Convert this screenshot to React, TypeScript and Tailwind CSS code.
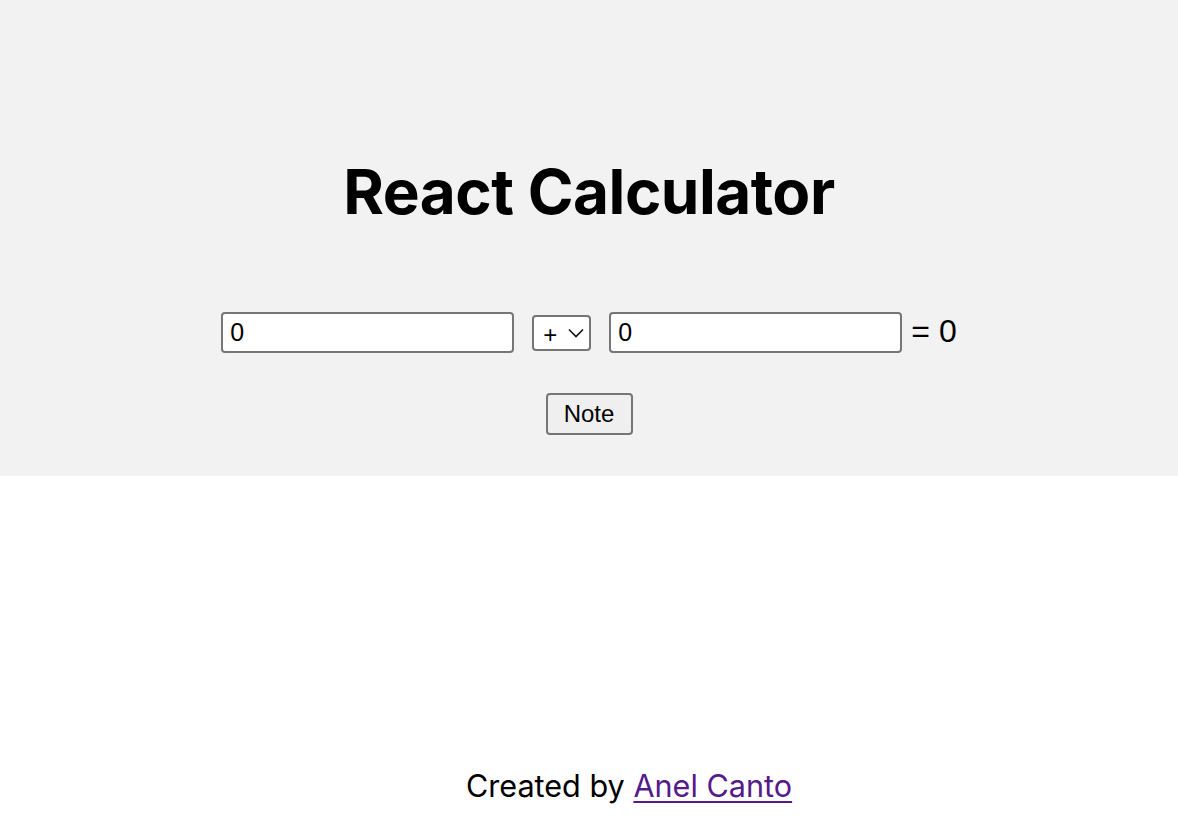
import React, { useState } from 'react';

export default function App() {
  const [a, setA] = useState('0');
  const [b, setB] = useState('0');
  const [op, setOp] = useState('+');

  const x = parseFloat(a) || 0;
  const y = parseFloat(b) || 0;
  const result = op === '+' ? x + y : op === '-' ? x - y : op === '*' ? x * y : y === 0 ? 0 : x / y;

  return (
    <div className="min-h-screen flex flex-col bg-white text-black">
      {/* Calculator */}
      <div className="bg-[#f2f2f2] h-[476px] flex flex-col items-center pt-[160px]">
        <h1 className="font-['Inter',sans-serif] font-bold text-[62px] leading-[64px] tracking-[-0.5px]">
          React Calculator
        </h1>

        <div className="flex items-center mt-[88px] font-['Liberation_Sans',Arial,sans-serif]">
          <input
            value={a}
            onChange={(e) => setA(e.target.value)}
            className="w-[293px] h-[41px] bg-white border-2 border-[#767676] rounded-[4px] px-[7px] text-[25px] outline-none"
          />
          <div className="relative ml-[18px]">
            <select
              value={op}
              onChange={(e) => setOp(e.target.value)}
              className="appearance-none w-[59px] h-[36px] bg-white border-2 border-[#767676] rounded-[4px] pl-[9px] text-[24px] outline-none"
            >
              <option value="+">+</option>
              <option value="-">-</option>
              <option value="*">*</option>
              <option value="/">/</option>
            </select>
            <svg className="absolute right-[7px] top-[13px] pointer-events-none" width="16" height="10" viewBox="0 0 16 10" fill="none">
              <path d="M1 1.5 L8 8.5 L15 1.5" stroke="#111" strokeWidth="1.6" />
            </svg>
          </div>
          <input
            value={b}
            onChange={(e) => setB(e.target.value)}
            className="w-[293px] h-[41px] ml-[18px] bg-white border-2 border-[#767676] rounded-[4px] px-[7px] text-[25px] outline-none"
          />
          <span className="ml-[9px] text-[32px] leading-none -mt-[4px]">= {result}</span>
        </div>

        <button className="mt-[40px] w-[87px] h-[42px] bg-[#efefef] border-2 border-[#767676] rounded-[4px] text-[24px] font-['Liberation_Sans',Arial,sans-serif]">
          Note
        </button>
      </div>

      <div className="flex-1" />

      {/* Footer */}
      <footer className="text-center pl-[80px] pb-[34px] font-['Inter',sans-serif] text-[30.6px] leading-[40px]">
        Created by{' '}
        <a href="#" className="text-[#551a8b] underline underline-offset-[4px] decoration-[2px]">
          Anel Canto
        </a>
      </footer>
    </div>
  );
}
